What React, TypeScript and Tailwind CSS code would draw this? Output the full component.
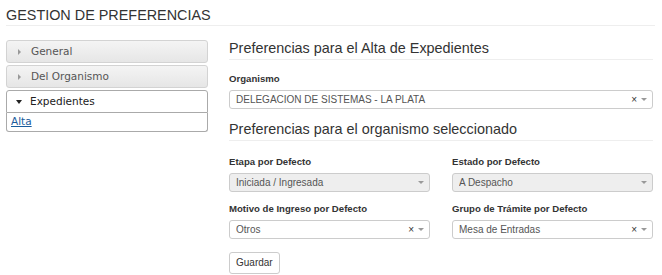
const sans = { fontFamily: '"Liberation Sans", Arial, sans-serif' };
const verdana = { fontFamily: '"DejaVu Sans", Verdana, sans-serif' };

function Caret({ down }: { down?: boolean }) {
  return down ? (
    <span className="inline-block w-0 h-0 border-l-[3px] border-r-[3px] border-t-[4px] border-l-transparent border-r-transparent border-t-[#222]" />
  ) : (
    <span className="inline-block w-0 h-0 border-t-[3px] border-b-[3px] border-l-[3px] border-t-transparent border-b-transparent border-l-[#999]" />
  );
}

function Select({
  value,
  clear,
  disabled,
}: {
  value: string;
  clear?: boolean;
  disabled?: boolean;
}) {
  return (
    <div
      className={`flex items-center h-[19px] pl-[6px] pr-[5px] border border-[#ccc] rounded-[3px] text-[10px] text-[#555] ${
        disabled ? "bg-[#eee]" : "bg-white"
      }`}
    >
      <span className="flex-1 truncate">{value}</span>
      {clear && <span className="text-[10px] text-[#333] mr-[4px] leading-none">×</span>}
      <span className="inline-block w-0 h-0 border-l-[3px] border-r-[3px] border-t-[3px] border-l-transparent border-r-transparent border-t-[#999]" />
    </div>
  );
}

function Field({ label, children }: { label: string; children: React.ReactNode }) {
  return (
    <div className="flex flex-col">
      <label className="text-[9.6px] font-bold text-[#333] mb-[5px] leading-[12px]">{label}</label>
      {children}
    </div>
  );
}

export default function App() {
  return (
    <div className="w-[662px] h-[275px] bg-white overflow-hidden pl-[6px] pr-[9px] pt-[6px]" style={sans}>
      <h1 className="text-[14.4px] text-[#333] leading-[18px] pb-[1px] border-b border-[#eee] -mr-[2px]">
        GESTION DE PREFERENCIAS
      </h1>

      <div className="flex mt-[14px] gap-[21px]">
        {/* Sidebar accordion */}
        <div className="w-[202px] flex flex-col gap-[2px] text-[10.5px]" style={verdana}>
          {["General", "Del Organismo"].map((t) => (
            <div
              key={t}
              className="h-[23px] flex items-center gap-[10px] pl-[11px] border border-[#d3d3d3] rounded-[3px] bg-gradient-to-b from-[#f4f4f4] to-[#e6e6e6] text-[#555]"
            >
              <Caret />
              {t}
            </div>
          ))}
          <div className="flex flex-col">
            <div className="h-[23px] flex items-center gap-[8px] pl-[9px] border border-[#aaa] rounded-t-[3px] bg-white text-[#212121]">
              <Caret down />
              Expedientes
            </div>
            <div className="h-[19px] flex items-center px-[4px] border border-t-0 border-[#aaa] rounded-b-[3px] bg-white">
              <a className="text-[#1a5c9c] underline" href="#">
                Alta
              </a>
            </div>
          </div>
        </div>

        {/* Main */}
        <div className="flex-1 flex flex-col">
          <h2 className="text-[14.4px] text-[#333] leading-[17px] pb-[2px] border-b border-[#eee]">
            Preferencias para el Alta de Expedientes
          </h2>
          <div className="mt-[13px]">
            <Field label="Organismo">
              <Select value="DELEGACION DE SISTEMAS - LA PLATA" clear />
            </Field>
          </div>
          <h2 className="mt-[12px] text-[14.4px] text-[#333] leading-[17px] pb-[2px] border-b border-[#eee]">
            Preferencias para el organismo seleccionado
          </h2>
          <div className="grid grid-cols-2 gap-x-[22px] gap-y-[11px] mt-[15px]">
            <Field label="Etapa por Defecto">
              <Select value="Iniciada / Ingresada" disabled />
            </Field>
            <Field label="Estado por Defecto">
              <Select value="A Despacho" disabled />
            </Field>
            <Field label="Motivo de Ingreso por Defecto">
              <Select value="Otros" clear />
            </Field>
            <Field label="Grupo de Trámite por Defecto">
              <Select value="Mesa de Entradas" clear />
            </Field>
          </div>
          <div className="mt-[10px]">
            <button className="h-[22px] px-[6px] border border-[#ccc] rounded-[3px] bg-white text-[10px] text-[#333]">
              Guardar
            </button>
          </div>
        </div>
      </div>
    </div>
  );
}
